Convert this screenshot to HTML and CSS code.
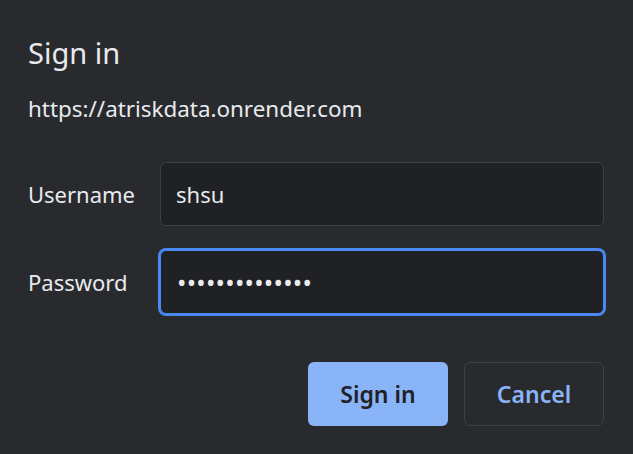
FILE: index.html
```html
<!DOCTYPE html>
<html>
<head>
<meta charset="utf-8">
<link rel="stylesheet" href="styles.css">
</head>
<body>
<div class="dialog">
  <h1 class="title">Sign in</h1>
  <p class="origin">https://atriskdata.onrender.com</p>
  <div class="form">
    <label class="label">Username</label>
    <div class="field">shsu</div>
    <label class="label">Password</label>
    <div class="field focused"><span class="dots">••••••••••••••</span></div>
  </div>
  <div class="actions">
    <button class="btn primary">Sign in</button>
    <button class="btn secondary">Cancel</button>
  </div>
</div>
</body>
</html>
```
FILE: styles.css
```css
html, body {
  margin: 0;
  background: #292a2d;
}
body {
  font-family: "Noto Sans", "Open Sans", sans-serif;
  color: #e8eaed;
}
.dialog {
  padding: 32px 29px 28px 28px;
  display: flex;
  flex-direction: column;
}
.title {
  margin: 0;
  font-size: 29px;
  font-weight: 400;
  line-height: 42px;
}
.origin {
  margin: 20px 0 0;
  font-size: 22.4px;
  line-height: 30px;
}
.form {
  margin-top: 38px;
  display: grid;
  grid-template-columns: 132px 1fr;
  row-gap: 24px;
  align-items: center;
}
.label {
  font-size: 22px;
}
.field {
  height: 64px;
  box-sizing: border-box;
  background: #202124;
  border: 1px solid #3c4043;
  border-radius: 6px;
  display: flex;
  align-items: center;
  padding: 0 0 0 15px;
  font-size: 22px;
}
.field.focused {
  border-color: #4a89f3;
  box-shadow: 0 0 0 2px #4a89f3;
}
.dots {
  font-size: 25px;
  letter-spacing: 0.25px;
  padding-left: 1px;
}
.actions {
  margin-top: 48px;
  display: flex;
  justify-content: flex-end;
  gap: 16px;
}
.btn {
  width: 140px;
  height: 64px;
  border-radius: 6px;
  font-family: inherit;
  font-size: 23px;
  font-weight: 600;
  cursor: pointer;
  padding: 0;
}
.primary {
  background: #8ab4f8;
  border: none;
  color: #202124;
}
.secondary {
  background: transparent;
  border: 1px solid #3c4043;
  color: #8ab4f8;
}
```
